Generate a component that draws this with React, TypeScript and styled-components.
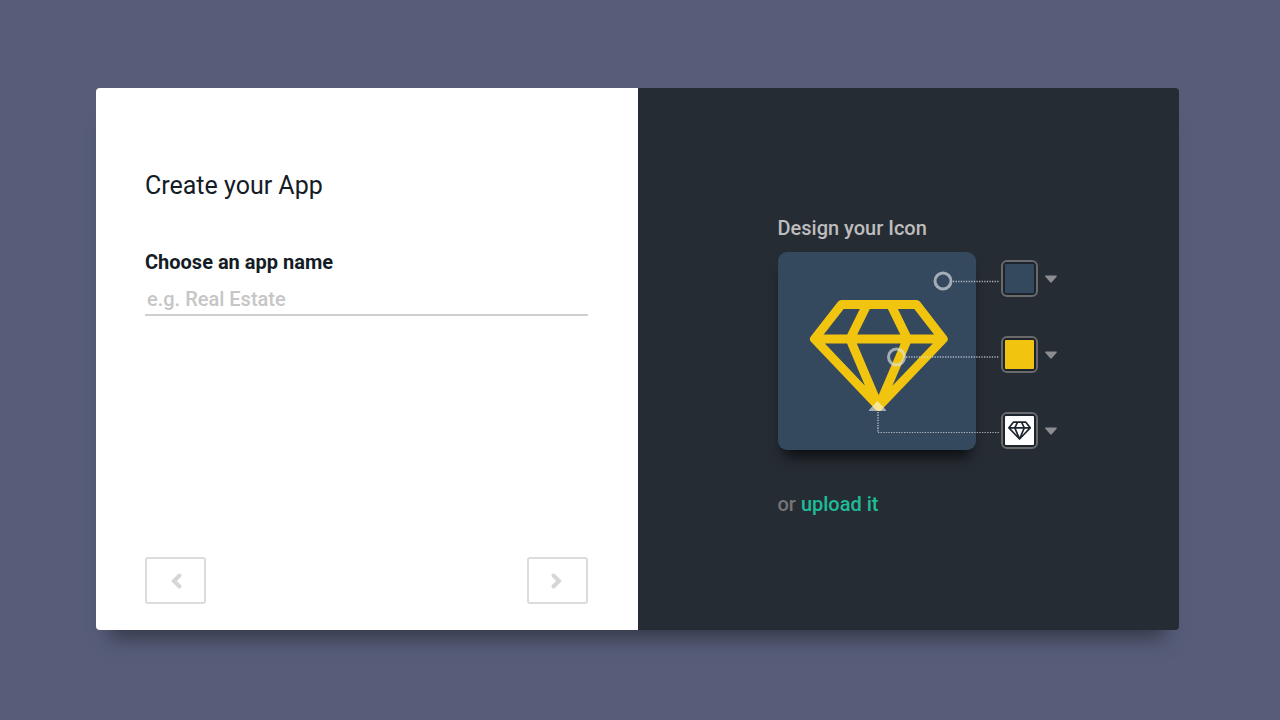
import React from 'react';
import styled, { createGlobalStyle } from 'styled-components';

const GlobalStyle = createGlobalStyle`
  *, *::before, *::after { box-sizing: border-box; }
  body {
    margin: 0;
    background: #575d79;
    font-family: Roboto, "Liberation Sans", sans-serif;
    color: #141c26;
  }
  button, input { font: inherit; }
`;

const Page = styled.main`
  min-height: 100vh;
  padding: 88px 101px 90px 96px;
  display: flex;
`;

const Card = styled.div`
  flex: 1;
  display: grid;
  grid-template-columns: 1fr 1fr;
  border-radius: 4px;
  box-shadow: 0 22px 18px -14px rgba(40, 44, 56, 0.75);
`;

const FormPanel = styled.form`
  display: flex;
  flex-direction: column;
  padding: 82px 50px 26px 49px;
  background: #fff;
  border-radius: 4px 0 0 4px;
`;

const Title = styled.h1`
  margin: 0 0 46px;
  font-size: 25px;
  line-height: 32px;
  font-weight: 400;
`;

const Label = styled.label`
  font-size: 20px;
  line-height: 28px;
  font-weight: 700;
`;

const TextInput = styled.input`
  width: 100%;
  height: 40px;
  padding: 10px 2px 2px;
  border: 0;
  border-bottom: 2px solid #cfcfcf;
  border-radius: 0;
  outline: 0;
  background: none;
  font-size: 20px;
  font-weight: 500;
  color: #141c26;

  &::placeholder {
    color: #c6c6c6;
    opacity: 1;
  }
`;

const Pager = styled.div`
  display: flex;
  justify-content: space-between;
  margin-top: auto;
`;

const PagerButton = styled.button`
  display: grid;
  place-items: center;
  width: 61px;
  height: 47px;
  padding: 0;
  border: 2px solid #dcdcdc;
  border-radius: 3px;
  background: #fff;
  color: #d6d6d6;
`;

const DesignPanel = styled.section`
  padding: 126px 40px 40px 140px;
  background: #262c34;
  border-radius: 0 4px 4px 0;
`;

const Heading = styled.h2`
  margin: 0 0 10px;
  font-size: 20px;
  line-height: 28px;
  font-weight: 500;
  color: #bdbdbd;
`;

const Designer = styled.div`
  position: relative;
  display: flex;
  gap: 25px;
`;

const Preview = styled.div`
  width: 198px;
  height: 198px;
  border-radius: 9px;
  background: #34495e;
  box-shadow: 0 12px 14px -6px rgba(0, 0, 0, 0.75);
`;

const Connectors = styled.svg`
  position: absolute;
  top: 0;
  left: 0;
  pointer-events: none;
`;

const Options = styled.div`
  display: flex;
  flex-direction: column;
  gap: 39px;
  padding-top: 8px;
`;

const OptionButton = styled.button`
  display: flex;
  align-items: center;
  gap: 7px;
  padding: 0;
  border: 0;
  background: none;
`;

const Swatch = styled.span`
  display: grid;
  place-items: center;
  width: 37px;
  height: 37px;
  border: 2px solid #6a6a6b;
  border-radius: 6px;
  background: #1e242e;
`;

const SwatchFill = styled.span<{ $fill: string }>`
  display: grid;
  place-items: center;
  width: 29px;
  height: 29px;
  border-radius: 1px;
  background: ${({ $fill }) => $fill};
`;

const Upload = styled.p`
  margin: 40px 0 0;
  font-size: 20px;
  line-height: 28px;
  font-weight: 500;
  color: #757577;
`;

const UploadLink = styled.a`
  color: #1fbc97;
  text-decoration: none;
`;

const Chevron = ({ d }: { d: string }) => (
  <svg width="16" height="18" viewBox="0 0 16 18" fill="none" stroke="currentColor" strokeWidth="4" strokeLinecap="round" aria-hidden="true">
    <path d={d} />
  </svg>
);

const Caret = () => (
  <svg width="12" height="8" viewBox="0 0 12 8" aria-hidden="true">
    <path d="M0.8 0.5H11.2Q12.4 0.8 11.6 1.8L7 7Q6 8 5 7L0.4 1.8Q-0.4 0.8 0.8 0.5Z" fill="#8b8d91" />
  </svg>
);

const gemPath =
  'M63.5 52.5H138.5L165.2 87L100.7 154.5L36.5 87ZM36.5 87H165.2M89 52.5L72 87L100.7 154.5L129.5 87L112.7 52.5';

const Gem = () => (
  <svg width="198" height="198" viewBox="0 0 198 198" fill="none" stroke="#f1c40f" strokeWidth="9" strokeLinejoin="round" role="img" aria-label="Diamond icon">
    <path d={gemPath} />
  </svg>
);

const SmallGem = () => (
  <svg width="23" height="19" viewBox="31 46 139 114" fill="none" stroke="#1c242d" strokeWidth="10" strokeLinejoin="round" aria-hidden="true">
    <path d={gemPath} />
  </svg>
);

const options = [
  { label: 'Background colour', fill: '#34495e' },
  { label: 'Icon colour', fill: '#f1c40f' },
  { label: 'Icon shape', fill: '#ffffff', icon: <SmallGem /> },
];

export default function App() {
  return (
    <>
      <GlobalStyle />
      <Page>
        <Card>
          <FormPanel onSubmit={(e) => e.preventDefault()}>
            <Title>Create your App</Title>
            <Label htmlFor="app-name">Choose an app name</Label>
            <TextInput id="app-name" type="text" placeholder="e.g. Real Estate" />
            <Pager>
              <PagerButton type="button" aria-label="Previous">
                <Chevron d="M11.5 3.5L6 9L11.5 14.5" />
              </PagerButton>
              <PagerButton type="submit" aria-label="Next">
                <Chevron d="M4.5 3.5L10 9L4.5 14.5" />
              </PagerButton>
            </Pager>
          </FormPanel>
          <DesignPanel>
            <Heading>Design your Icon</Heading>
            <Designer>
              <Preview>
                <Gem />
              </Preview>
              <Connectors width="223" height="198" viewBox="0 0 223 198" fill="none" aria-hidden="true">
                <g stroke="#d9dde1" strokeOpacity="0.75" strokeDasharray="1.3 1.3">
                  <path d="M175 29.5H221M128 105H221" strokeWidth="1.5" />
                  <path d="M100 160V180" strokeWidth="1.5" />
                  <path d="M100 180.5H222" />
                </g>
                <g stroke="#dfe3e6" strokeOpacity="0.65" strokeWidth="3">
                  <circle cx="165" cy="29" r="8" />
                  <circle cx="118.5" cy="105" r="8" />
                </g>
                <path d="M99.5 149L108 158V159H91V158Z" fill="#ffffff" fillOpacity="0.55" />
              </Connectors>
              <Options>
                {options.map(({ label, fill, icon }) => (
                  <OptionButton key={label} type="button" aria-label={label}>
                    <Swatch>
                      <SwatchFill $fill={fill}>{icon}</SwatchFill>
                    </Swatch>
                    <Caret />
                  </OptionButton>
                ))}
              </Options>
            </Designer>
            <Upload>
              or <UploadLink href="#upload">upload it</UploadLink>
            </Upload>
          </DesignPanel>
        </Card>
      </Page>
    </>
  );
}
